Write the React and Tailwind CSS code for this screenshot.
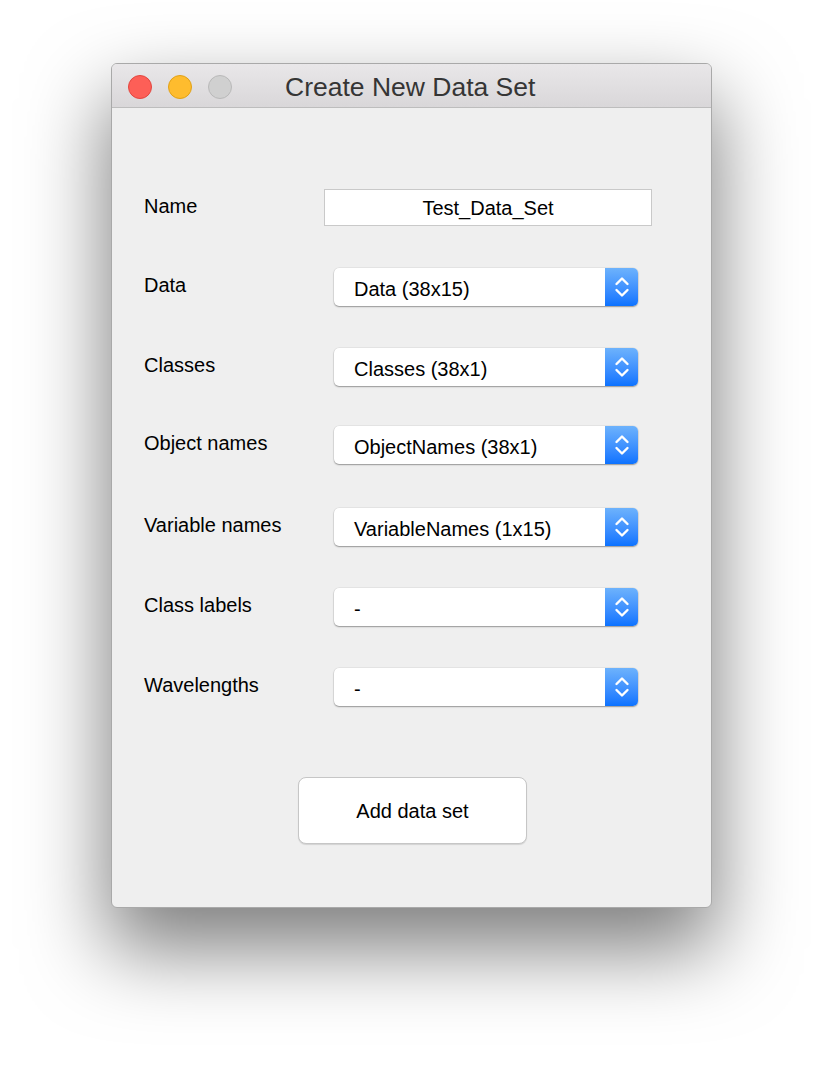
const rows = [
  { label: 'Data', value: 'Data (38x15)', mt: 'mt-[42px]' },
  { label: 'Classes', value: 'Classes (38x1)', mt: 'mt-[42px]' },
  { label: 'Object names', value: 'ObjectNames (38x1)', mt: 'mt-[40px]' },
  { label: 'Variable names', value: 'VariableNames (1x15)', mt: 'mt-[44px]' },
  { label: 'Class labels', value: '-', mt: 'mt-[42px]' },
  { label: 'Wavelengths', value: '-', mt: 'mt-[42px]' },
];

const Stepper = () => (
  <div className="w-[33px] h-full rounded-r-[5px] bg-gradient-to-b from-[#6db2fc] to-[#0a72ff] flex items-center justify-center">
    <svg width="16" height="26" viewBox="0 0 16 26" fill="none" stroke="white" strokeWidth="2.4" strokeLinecap="round" strokeLinejoin="round">
      <path d="M2.5 10 L8 4.5 L13.5 10" />
      <path d="M2.5 16 L8 21.5 L13.5 16" />
    </svg>
  </div>
);

const Select = ({ value }) => (
  <div className="ml-[10px] w-[304px] h-[38px] flex bg-white rounded-[5px] shadow-[0_1px_1.5px_rgba(0,0,0,0.35),0_0_0_0.5px_rgba(0,0,0,0.08)]">
    <div className="flex-1 flex items-center pl-[20px] pt-[3px] text-[20px] text-black">{value}</div>
    <Stepper />
  </div>
);

const Dot = ({ color }) => (
  <div className={`w-[24px] h-[24px] rounded-full border ${color}`} />
);

export default function App() {
  return (
    <div className="w-[824px] h-[1068px] bg-white pt-[63px] pl-[111px]" style={{ fontFamily: '"Liberation Sans", Arial, sans-serif' }}>
      <div className="w-[601px] h-[845px] rounded-[6px] border border-[#a9a9a9] bg-[#efefef] shadow-[0_38px_80px_4px_rgba(0,0,0,0.5)] overflow-hidden flex flex-col">
        {/* Title bar */}
        <div className="relative h-[44px] shrink-0 bg-gradient-to-b from-[#e9e7e9] to-[#d9d7d9] border-b border-[#bdbdbd] flex items-center">
          <div className="flex gap-[16px] pl-[16px] pt-[2px]">
            <Dot color="bg-[#fd5f57] border-[#e2463f]" />
            <Dot color="bg-[#febc2e] border-[#e1a116]" />
            <Dot color="bg-[#d0d0d0] border-[#b9b9b9]" />
          </div>
          <div className="absolute left-[173px] top-0 h-full flex items-center pt-[4px] text-[26.5px] text-[#353535]">
            Create New Data Set
          </div>
        </div>

        {/* Body */}
        <div className="pt-[81px] pl-[32px]">
          <div className="flex items-center h-[37px]">
            <div className="w-[180px] text-[20px] text-black -mt-[4px]">Name</div>
            <div className="w-[328px] h-[37px] bg-white border border-[#c9c9c9] flex items-center justify-center text-[20px] text-black">
              Test_Data_Set
            </div>
          </div>

          {rows.map((r) => (
            <div key={r.label} className={`flex items-center h-[38px] ${r.mt}`}>
              <div className="w-[180px] text-[20px] text-black -mt-[4px]">{r.label}</div>
              <Select value={r.value} />
            </div>
          ))}

          <div className="mt-[71px] pl-[154px]">
            <button className="w-[229px] h-[67px] bg-white rounded-[8px] border border-[#c6c6c6] shadow-[0_1px_1px_rgba(0,0,0,0.12)] text-[20px] text-black">
              Add data set
            </button>
          </div>
        </div>
      </div>
    </div>
  );
}
